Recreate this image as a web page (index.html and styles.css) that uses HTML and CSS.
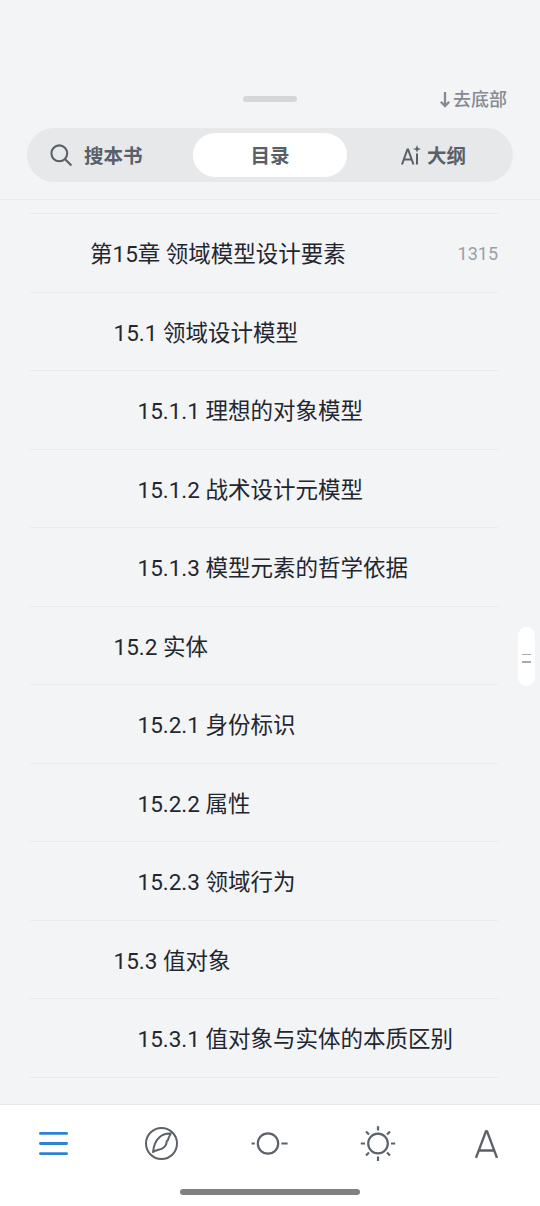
FILE: index.html
```html
<!DOCTYPE html>
<html lang="zh-CN">
<head>
    <meta charset="UTF-8">
    <meta name="viewport" content="width=device-width, initial-scale=1.0">
    <title>目录</title>
    <link rel="stylesheet" href="styles.css">
</head>
<body>
    <div class="reader">
        <header class="header">
            <div class="header-top">
                <span class="handle"></span>
                <a class="to-bottom">
                    <svg width="12" height="17" viewBox="0 0 12 17" fill="none" stroke="currentColor" stroke-width="2.3">
                        <path d="M6 0V14M1.8 9.8L6 14L10.2 9.8"/>
                    </svg>
                    <span>去底部</span>
                </a>
            </div>
            <div class="tabs">
                <div class="tab tab-search">
                    <svg width="24" height="24" viewBox="0 0 24 24" fill="none" stroke="currentColor" stroke-width="2.1">
                        <circle cx="10.3" cy="10.3" r="7.9"/>
                        <path d="M15.9 15.9L22.4 22.4"/>
                    </svg>
                    <span class="tab-text">搜本书</span>
                </div>
                <div class="tab tab-active"><span class="tab-text">目录</span></div>
                <div class="tab tab-outline">
                    <svg width="20" height="20" viewBox="0 0 20 20" fill="none" stroke="currentColor" stroke-width="2">
                        <path d="M1 19.5L6.4 4.4H7.1L12.5 19.5M3 14.5H10.5M16 8.5V19.5"/>
                        <path d="M16 0L17 2.9L20 3.9L17 4.9L16 7.4L15 4.9L12 3.9L15 2.9Z" fill="currentColor" stroke="none"/>
                    </svg>
                    <span class="tab-text">大纲</span>
                </div>
            </div>
        </header>

        <main class="toc">
            <div class="toc-item level-1"><span>第15章 领域模型设计要素</span><span class="page">1315</span></div>
            <div class="toc-item level-2">15.1 领域设计模型</div>
            <div class="toc-item level-3">15.1.1 理想的对象模型</div>
            <div class="toc-item level-3">15.1.2 战术设计元模型</div>
            <div class="toc-item level-3">15.1.3 模型元素的哲学依据</div>
            <div class="toc-item level-2">15.2 实体</div>
            <div class="toc-item level-3">15.2.1 身份标识</div>
            <div class="toc-item level-3">15.2.2 属性</div>
            <div class="toc-item level-3">15.2.3 领域行为</div>
            <div class="toc-item level-2">15.3 值对象</div>
            <div class="toc-item level-3">15.3.1 值对象与实体的本质区别</div>
        </main>

        <div class="scroll-thumb"><i></i><i></i></div>

        <footer class="footer">
            <nav class="nav">
                <a class="nav-item nav-active">
                    <svg width="40" height="40" viewBox="0 0 40 40" fill="none" stroke="currentColor" stroke-width="2.8" stroke-linecap="round">
                        <path d="M6.4 10.4H32.6M6.4 20.5H32.6M6.4 30.6H32.6"/>
                    </svg>
                </a>
                <a class="nav-item">
                    <svg width="40" height="40" viewBox="0 0 40 40" fill="none" stroke="currentColor" stroke-width="2">
                        <circle cx="19.5" cy="20.5" r="15.5"/>
                        <path d="M11 29C11.6 22.5 13.6 17.8 17.2 14.4C20.2 11.5 24.4 10.2 28.8 10.5C27.6 12.9 26.4 14.6 26 17L24.6 18.4C24.8 21.4 23 24 20 25.7C17.2 27 13.8 26.6 11 29Z" stroke-linejoin="round"/>
                    </svg>
                </a>
                <a class="nav-item">
                    <svg width="40" height="40" viewBox="0 0 40 40" fill="none" stroke="currentColor" stroke-width="2.2">
                        <circle cx="18" cy="20.5" r="10.2"/>
                        <path d="M1.6 20.5H4.8M31.4 20.5H37.6"/>
                    </svg>
                </a>
                <a class="nav-item">
                    <svg width="40" height="40" viewBox="0 0 40 40" fill="none" stroke="currentColor" stroke-width="2.2">
                        <circle cx="20" cy="20.5" r="9.8"/>
                        <path d="M20 3.3V7.5M20 33.5V37.9M2.8 20.5H7M33 20.5H37.2M8 8.5L11 11.5M29 29.5L32 32.5M8 32.5L11 29.5M29 11.5L32 8.5"/>
                    </svg>
                </a>
                <a class="nav-item">
                    <svg width="40" height="40" viewBox="0 0 40 40" fill="none" stroke="currentColor" stroke-width="2.4" stroke-linejoin="bevel">
                        <path d="M10 34.9L20 8.2H21L31 34.9M13.2 27.5H27.8"/>
                    </svg>
                </a>
            </nav>
            <div class="home-bar"></div>
        </footer>
    </div>
</body>
</html>
```
FILE: styles.css
```css
* {
    box-sizing: border-box;
}

body {
    margin: 0;
    background-color: #f3f4f6;
    font-family: Roboto, "Noto Sans CJK SC", sans-serif;
    color: #23262f;
}

.reader {
    position: relative;
    display: flex;
    flex-direction: column;
    height: 1206px;
    overflow: hidden;
}

/* Шапка */
.header {
    flex: none;
    height: 200px;
    padding: 85px 27px 0;
    border-bottom: 1px solid #eaebee;
}

.header-top {
    display: grid;
    grid-template-columns: 1fr 54px 1fr;
    align-items: center;
    height: 28px;
}

.handle {
    grid-column: 2;
    height: 6px;
    margin-bottom: 1px;
    border-radius: 3px;
    background-color: #d5d6d8;
}

.to-bottom {
    display: flex;
    justify-content: flex-end;
    align-items: center;
    gap: 2px;
    padding: 2px 6px 0 0;
    font-size: 18px;
    font-weight: 500;
    line-height: 26px;
    color: #858a94;
}

/* Вкладки */
.tabs {
    display: grid;
    grid-template-columns: 161px 154px 161px;
    height: 54px;
    margin-top: 15px;
    padding: 5px;
    border-radius: 27px;
    background-color: #e7e8ea;
    font-size: 19.5px;
    font-weight: 700;
    color: #596069;
}

.tab {
    display: flex;
    align-items: center;
    justify-content: center;
}

.tab-text {
    padding-bottom: 2px;
}

.tab-search {
    justify-content: flex-start;
    gap: 11px;
    padding-left: 17px;
}

.tab-active {
    border-radius: 23px;
    background-color: #ffffff;
}

.tab-outline {
    gap: 6px;
    padding-left: 12px;
}

/* Оглавление */
.toc {
    flex: 1;
    margin: 13px 42px 0 30px;
    border-top: 1px solid #e9eaed;
    overflow: hidden;
}

.toc-item {
    display: flex;
    align-items: center;
    justify-content: space-between;
    height: 78.5px;
    padding-bottom: 1px;
    border-bottom: 1px solid #e9eaed;
    font-size: 22.5px;
    white-space: nowrap;
}

.level-1 {
    padding-left: 60px;
}

.level-2 {
    padding-left: 83.5px;
}

.level-3 {
    padding-left: 107.5px;
}

.page {
    padding-top: 3px;
    font-size: 18px;
    color: #9b9fa7;
}

/* Ползунок прокрутки поверх списка */
.scroll-thumb {
    position: absolute;
    top: 627px;
    right: 5px;
    display: flex;
    flex-direction: column;
    align-items: center;
    justify-content: center;
    gap: 6px;
    width: 17px;
    height: 59px;
    padding-top: 3px;
    border-radius: 9px;
    background-color: #ffffff;
}

.scroll-thumb i {
    width: 9px;
    height: 1.5px;
    background-color: #aaaaaa;
}

/* Нижняя панель */
.footer {
    flex: none;
    height: 102px;
    border-top: 1px solid #e7e8eb;
    background-color: #ffffff;
}

.nav {
    display: flex;
    justify-content: space-between;
    padding: 18px 34px 0;
    color: #5d626a;
}

.nav-item {
    height: 40px;
}

.nav-active {
    color: #2e82d3;
}

.home-bar {
    width: 180px;
    height: 6px;
    margin: 26px auto 0;
    border-radius: 3px;
    background-color: #808080;
}
```
